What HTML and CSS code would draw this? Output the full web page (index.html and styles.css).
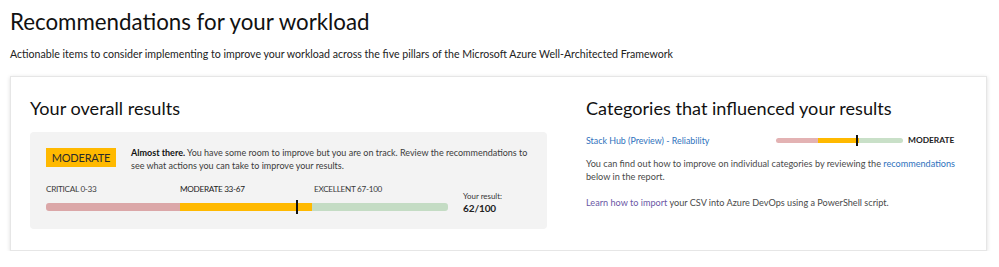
FILE: index.html
```html
<!DOCTYPE html>
<html lang="en">
<head>
<meta charset="utf-8">
<title>Recommendations for your workload</title>
<link rel="stylesheet" href="styles.css">
</head>
<body>
<header class="page-head">
  <h1 class="page-title">Recommendations for your workload</h1>
  <p class="page-sub">Actionable items to consider implementing to improve your workload across the five pillars of the Microsoft Azure Well-Architected Framework</p>
</header>
<section class="card">
  <div class="col col-left">
    <h2 class="section-title">Your overall results</h2>
    <div class="result-box">
      <div class="result-top">
        <span class="badge">MODERATE</span>
        <p class="result-desc"><strong>Almost there.</strong> You have some room to improve but you are on track. Review the recommendations to see what actions you can take to improve your results.</p>
      </div>
      <div class="scale-row">
        <div class="scale">
          <div class="scale-labels">
            <span class="lbl lbl-crit">CRITICAL 0-33</span>
            <span class="lbl lbl-mod">MODERATE 33-67</span>
            <span class="lbl lbl-exc">EXCELLENT 67-100</span>
          </div>
          <div class="bar">
            <span class="seg seg-red"></span>
            <span class="seg seg-yellow"></span>
            <span class="seg seg-green"></span>
            <span class="marker" style="left: 62.5%"></span>
          </div>
        </div>
        <div class="score">
          <span class="score-label">Your result:</span>
          <span class="score-value">62/100</span>
        </div>
      </div>
    </div>
  </div>
  <div class="col col-right">
    <h2 class="section-title">Categories that influenced your results</h2>
    <div class="cat-row">
      <a class="link cat-link" href="#">Stack Hub (Preview) - Reliability</a>
      <div class="mini-bar">
        <span class="mseg mseg-red"></span>
        <span class="mseg mseg-yellow"></span>
        <span class="mseg mseg-green"></span>
        <span class="mini-marker" style="left: 63%"></span>
      </div>
      <span class="cat-level">MODERATE</span>
    </div>
    <p class="info">You can find out how to improve on individual categories by reviewing the <a class="link" href="#">recommendations</a> below in the report.</p>
    <p class="info info-import"><a class="link visited" href="#">Learn how to import</a> your CSV into Azure DevOps using a PowerShell script.</p>
  </div>
</section>
</body>
</html>
```
FILE: styles.css
```css
* { box-sizing: border-box; }
html, body { margin: 0; padding: 0; background: #ffffff; }
body {
  font-family: "Segoe UI", Lato, "Open Sans", sans-serif;
  color: #1b1b1b;
  padding: 0 12px 0 10px;
}
.page-head { padding-top: 7px; }
.page-title {
  margin: 0;
  font-size: 22.3px;
  font-weight: 400;
  line-height: 30px;
  color: #111111;
}
.page-sub {
  margin: 10px 0 0;
  font-size: 10.6px;
  line-height: 14px;
  color: #222222;
}
.card {
  margin-top: 15px;
  height: 175px;
  background: #fff;
  border: 1px solid #e6e6e6;
  box-shadow: 0 1px 4px rgba(0,0,0,0.14);
  display: flex;
  padding: 18px 20px 0 19px;
  gap: 39px;
}
.col-left { width: 517px; flex: none; }
.col-right { flex: 1; }
.section-title {
  margin: 0;
  font-size: 18.1px;
  font-weight: 400;
  line-height: 26px;
  color: #111111;
}
.result-box {
  margin-top: 11px;
  background: #f3f3f3;
  border-radius: 4px;
  height: 97px;
  padding: 16px 16px 0 16px;
}
.result-top { display: flex; gap: 15px; align-items: flex-start; height: 26px; }
.badge {
  flex: none;
  width: 70px;
  height: 19px;
  background: #ffb900;
  color: #2b2b2b;
  font-size: 11px;
  letter-spacing: -0.2px;
  line-height: 19px;
  text-align: center;
}
.result-desc {
  margin: -1px 0 0;
  font-size: 9px;
  line-height: 12.5px;
  color: #3b3b3b;
}
.result-desc strong { color: #111; font-weight: 700; }
.scale-row { display: flex; gap: 15px; margin-top: 7px; }
.scale { width: 402px; flex: none; }
.scale-labels { display: flex; height: 16px; }
.lbl { font-size: 8.2px; letter-spacing: -0.3px; line-height: 16px; color: #3b3b3b; }
.lbl-crit { width: 134px; }
.lbl-mod { width: 134px; color: #222; }
.bar {
  position: relative;
  display: flex;
  height: 8px;
  margin-top: 6px;
}
.seg { height: 8px; }
.seg-red { width: 134px; background: #dba7a8; border-radius: 3px 0 0 3px; }
.seg-yellow { width: 132px; background: #ffb900; }
.seg-green { flex: 1; background: #c4dcc4; border-radius: 0 3px 3px 0; }
.marker {
  position: absolute;
  top: -3px;
  width: 2px;
  height: 14px;
  background: #111;
  margin-left: -1px;
}
.score { display: flex; flex-direction: column; padding-top: 9px; }
.score-label { font-size: 7.9px; line-height: 12px; color: #333; }
.score-value { font-size: 10px; letter-spacing: -0.1px; line-height: 12px; font-weight: 700; color: #222; }

.cat-row {
  margin-top: 11px;
  display: flex;
  align-items: center;
  height: 16px;
}
.link { color: #2f72bd; text-decoration: none; }
.link.visited { color: #6b58a6; }
.cat-link { font-size: 8.9px; width: 190px; flex: none; }
.mini-bar {
  position: relative;
  display: flex;
  width: 127px;
  height: 5px;
  flex: none;
}
.mseg { height: 5px; }
.mseg-red { width: 42px; background: #e3b2b3; border-radius: 3px 0 0 3px; }
.mseg-yellow { width: 41px; background: #ffb900; }
.mseg-green { flex: 1; background: #c9e0c8; border-radius: 0 3px 3px 0; }
.mini-marker {
  position: absolute;
  top: -3px;
  width: 2px;
  height: 11px;
  background: #111;
}
.cat-level {
  margin-left: 5px;
  font-size: 8.4px;
  font-weight: 700;
  color: #222;
}
.info {
  margin: 9px 0 0;
  font-size: 9.15px;
  line-height: 13px;
  color: #4a4a4a;
}
.info-import { margin-top: 13px; }
```
